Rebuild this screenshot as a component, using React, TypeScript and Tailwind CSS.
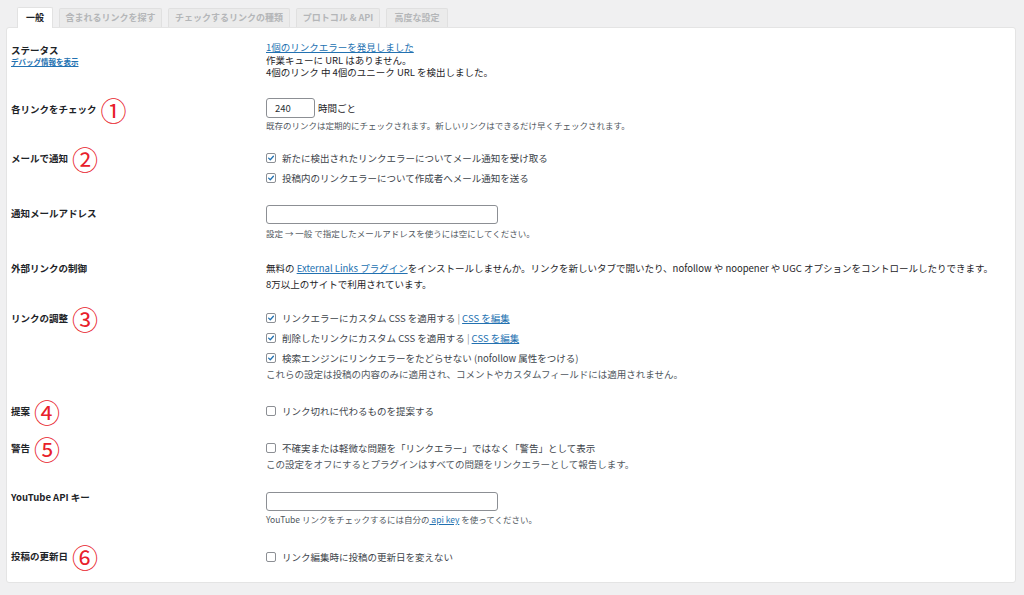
import React from 'react';

const FONT = '"Noto Sans CJK JP", "Noto Sans", sans-serif';

const Circled = ({ n }: { n: string }) => (
  <span className="ml-[4px] text-[26px] leading-[23px] font-normal text-[#e8202a]">{n}</span>
);

const Check = ({ checked }: { checked?: boolean }) => (
  <span className="flex h-[10px] w-[10px] shrink-0 items-center justify-center rounded-[2px] border border-[#8c8f94] bg-white">
    {checked && (
      <svg viewBox="0 0 10 10" className="h-[8px] w-[8px]">
        <path d="M2 5.2 L4.1 7.2 L8 2.8" fill="none" stroke="#2271b1" strokeWidth="1.6" strokeLinecap="round" strokeLinejoin="round" />
      </svg>
    )}
  </span>
);

const CheckRow = ({ checked, children }: { checked?: boolean; children: React.ReactNode }) => (
  <div className="flex h-[20px] items-center gap-[6px] text-[9.5px] text-[#3c434a]">
    <Check checked={checked} />
    <span>{children}</span>
  </div>
);

const Desc = ({ children, className = '' }: { children: React.ReactNode; className?: string }) => (
  <p className={`text-[8.5px] leading-[11px] text-[#50575e] ${className}`}>{children}</p>
);

const A = ({ children }: { children: React.ReactNode }) => (
  <a className="text-[#2271b1] underline underline-offset-1">{children}</a>
);

interface RowProps {
  label: React.ReactNode;
  row: string;
  labelPt: string;
  valuePt: string;
  children: React.ReactNode;
}

const Row = ({ label, row, labelPt, valuePt, children }: RowProps) => (
  <div className={`flex ${row}`}>
    <div className={`w-[255px] shrink-0 ${labelPt}`}>{label}</div>
    <div className={`flex-1 ${valuePt}`}>{children}</div>
  </div>
);

const Label = ({ text, n }: { text: string; n?: string }) => (
  <div className="flex items-center text-[9.5px] font-bold leading-[13px] text-[#1d2327]">
    <span>{text}</span>
    {n && <Circled n={n} />}
  </div>
);

const tabs = [
  { name: '一般', w: 'w-[36px]', active: true },
  { name: '含まれるリンクを探す', w: 'w-[103px]' },
  { name: 'チェックするリンクの種類', w: 'w-[122px]' },
  { name: 'プロトコル & API', w: 'w-[84px]' },
  { name: '高度な設定', w: 'w-[62px]' },
];

export default function App() {
  return (
    <div className="h-[595px] w-[1024px] overflow-hidden bg-[#f0f0f1]" style={{ fontFamily: FONT }}>
      <div className="flex h-[27px] items-end gap-[6px] pl-[17px]">
        {tabs.map((t) =>
          t.active ? (
            <div
              key={t.name}
              className={`${t.w} relative z-10 -mb-px flex h-[21px] items-center justify-center rounded-t-[2px] border border-b-0 border-[#e2e2e2] bg-white text-[9px] font-bold text-[#1d2327]`}
            >
              {t.name}
            </div>
          ) : (
            <div
              key={t.name}
              className={`${t.w} flex h-[19px] items-center justify-center rounded-t-[2px] border border-b-0 border-[#e0e0e0] bg-[#ebebeb] text-[9px] font-semibold text-[#b4b6b8]`}
            >
              {t.name}
            </div>
          )
        )}
      </div>

      <div className="ml-[6px] w-[1010px] rounded-[3px] border border-[#e4e4e4] bg-white pl-[4px]">
        <Row
          label={
            <div>
              <div className="text-[9.5px] font-bold leading-[13px] text-[#1d2327]">ステータス</div>
              <div className="text-[7.5px] font-semibold leading-[10px] text-[#2271b1] underline">デバッグ情報を表示</div>
            </div>
          }
          row="h-[63px]"
          labelPt="pt-[16px]"
          valuePt="pt-[13px]"
        >
          <div className="text-[9.5px] leading-[12.5px] text-[#1d2327]">
            <div>
              <A>1個のリンクエラーを発見しました</A>
            </div>
            <div>作業キューに URL はありません。</div>
            <div>4個のリンク 中 4個のユニーク URL を検出しました。</div>
          </div>
        </Row>

        <Row label={<Label text="各リンクをチェック" n="①" />} row="h-[50px]" labelPt="pt-[7px]" valuePt="pt-[7px]">
          <div className="flex items-center gap-[3px]">
            <div className="flex h-[20px] w-[49px] items-center rounded-[3px] border border-[#8c8f94] px-[8px] text-[9.5px] text-[#2c3338]">
              240
            </div>
            <span className="text-[9.5px] text-[#1d2327]">時間ごと</span>
          </div>
          <Desc className="mt-[2px]">既存のリンクは定期的にチェックされます。新しいリンクはできるだけ早くチェックされます。</Desc>
        </Row>

        <Row label={<Label text="メールで通知" n="②" />} row="h-[55px]" labelPt="pt-[6px]" valuePt="pt-[7px]">
          <CheckRow checked>新たに検出されたリンクエラーについてメール通知を受け取る</CheckRow>
          <CheckRow checked>投稿内のリンクエラーについて作成者へメール通知を送る</CheckRow>
        </Row>

        <Row label={<Label text="通知メールアドレス" />} row="h-[55px]" labelPt="pt-[11px]" valuePt="pt-[9px]">
          <div className="h-[19px] w-[232px] rounded-[3px] border border-[#8c8f94]" />
          <Desc className="mt-[4px]">設定 → 一般 で指定したメールアドレスを使うには空にしてください。</Desc>
        </Row>

        <Row label={<Label text="外部リンクの制御" />} row="h-[50px]" labelPt="pt-[11px]" valuePt="pt-[10px]">
          <div className="text-[9.5px] leading-[15.5px] text-[#1d2327]">
            <div>
              無料の <A>External Links プラグイン</A>をインストールしませんか。リンクを新しいタブで開いたり、nofollow や noopener や UGC オプションをコントロールしたりできます。
            </div>
            <div>8万以上のサイトで利用されています。</div>
          </div>
        </Row>

        <Row label={<Label text="リンクの調整" n="③" />} row="h-[95px]" labelPt="pt-[6px]" valuePt="pt-[7px]">
          <CheckRow checked>
            リンクエラーにカスタム CSS を適用する <span className="text-[#8c8f94]">|</span> <A>CSS を編集</A>
          </CheckRow>
          <CheckRow checked>
            削除したリンクにカスタム CSS を適用する <span className="text-[#8c8f94]">|</span> <A>CSS を編集</A>
          </CheckRow>
          <CheckRow checked>検索エンジンにリンクエラーをたどらせない (nofollow 属性をつける)</CheckRow>
          <p className="text-[9.5px] leading-[13px] text-[#50575e]">
            これらの設定は投稿の内容のみに適用され、コメントやカスタムフィールドには適用されません。
          </p>
        </Row>

        <Row label={<Label text="提案" n="④" />} row="h-[35px]" labelPt="pt-[4px]" valuePt="pt-[5px]">
          <CheckRow>リンク切れに代わるものを提案する</CheckRow>
        </Row>

        <Row label={<Label text="警告" n="⑤" />} row="h-[50px]" labelPt="pt-[6px]" valuePt="pt-[7px]">
          <CheckRow>不確実または軽微な問題を「リンクエラー」ではなく「警告」として表示</CheckRow>
          <p className="text-[9.5px] leading-[13px] text-[#50575e]">
            この設定をオフにするとプラグインはすべての問題をリンクエラーとして報告します。
          </p>
        </Row>

        <Row label={<Label text="YouTube API キー" />} row="h-[60px]" labelPt="pt-[10px]" valuePt="pt-[11px]">
          <div className="h-[19px] w-[232px] rounded-[3px] border border-[#8c8f94]" />
          <Desc className="mt-[3px]">
            YouTube リンクをチェックするには自分の<A><span className="whitespace-pre"> api key</span></A> を使ってください。
          </Desc>
        </Row>

        <Row label={<Label text="投稿の更新日" n="⑥" />} row="h-[41px]" labelPt="pt-[4px]" valuePt="pt-[6px]">
          <CheckRow>リンク編集時に投稿の更新日を変えない</CheckRow>
        </Row>
      </div>
    </div>
  );
}
